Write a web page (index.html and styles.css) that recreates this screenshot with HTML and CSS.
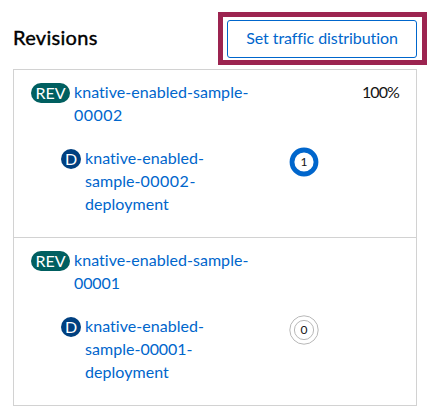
FILE: index.html
```html
<!DOCTYPE html>
<html lang="en">
<head>
<meta charset="utf-8">
<title>Revisions</title>
<link rel="stylesheet" href="styles.css">
</head>
<body>
<main class="panel">
  <header class="header">
    <h2 class="title">Revisions</h2>
    <div class="action">
      <button class="button" type="button">Set traffic distribution</button>
      <span class="highlight"></span>
    </div>
  </header>
  <ul class="list">
    <li class="item">
      <div class="revision">
        <span class="badge rev">REV</span>
        <a class="link name">knative-enabled-sample-<br><span class="digits">00002</span></a>
        <span class="percent">100%</span>
      </div>
      <div class="deployment">
        <span class="badge dep">D</span>
        <a class="link name">knative-enabled-<br>sample-<span class="digits">00002</span>-<br>deployment</a>
        <svg class="pods" viewBox="0 0 30 30"><circle cx="15" cy="15" r="12" fill="none" stroke="#06c" stroke-width="4.8"/><text x="15" y="19.2" text-anchor="middle">1</text></svg>
      </div>
    </li>
    <li class="item">
      <div class="revision">
        <span class="badge rev">REV</span>
        <a class="link name">knative-enabled-sample-<br><span class="digits last">00001</span></a>
      </div>
      <div class="deployment">
        <span class="badge dep">D</span>
        <a class="link name">knative-enabled-<br>sample-<span class="digits last">00001</span>-<br>deployment</a>
        <svg class="pods" viewBox="0 0 30 30"><g fill="none" stroke="#b8b8b8" stroke-width="1"><circle cx="15" cy="15" r="14.2"/><circle cx="15" cy="15" r="9.6"/></g><text x="15" y="19.2" text-anchor="middle">0</text></svg>
      </div>
    </li>
  </ul>
</main>
</body>
</html>
```
FILE: styles.css
```css
* { box-sizing: border-box; }
body {
  margin: 0;
  background: #fff;
  color: #151515;
  font: 16px/23px Lato, "Open Sans", sans-serif;
  font-variant-ligatures: none;
}
.panel { padding: 20px 14px 0 13px; }
.header {
  display: flex;
  align-items: center;
  justify-content: space-between;
  height: 38px;
  margin-bottom: 11px;
}
.title {
  margin: 0;
  padding-bottom: 4px;
  font-size: 20px;
  font-weight: 400;
  line-height: 26px;
  letter-spacing: 0.3px;
  color: #000;
  -webkit-text-stroke: 0.4px #000;
}
.action { position: relative; }
.button {
  display: block;
  width: 190px;
  height: 38px;
  padding: 0 0 3px;
  border: 1px solid #06c;
  border-radius: 3px;
  background: #fff;
  color: #06c;
  font: inherit;
  font-variant-ligatures: none;
  letter-spacing: -0.08px;
  white-space: nowrap;
}
.highlight {
  position: absolute;
  top: -8.5px;
  left: -9.5px;
  width: 209px;
  height: 53px;
  border: 5px solid #9c2450;
}
.list {
  margin: 0;
  padding: 0;
  list-style: none;
  border: 1px solid #d2d2d2;
}
.item {
  height: 167px;
  padding: 10px 17px 0;
}
.item + .item {
  height: 168px;
  border-top: 1px solid #d2d2d2;
}
.revision, .deployment {
  display: flex;
  align-items: flex-start;
}
.deployment { margin: 20px 0 0 30px; }
.badge {
  flex: none;
  height: 20px;
  margin: 3px 4px 0 0;
  border-radius: 10px;
  color: #fff;
  line-height: 19px;
  text-align: center;
}
.rev { width: 39px; background: #005f60; }
.dep { width: 20px; background: #004080; }
.link { color: #06c; white-space: nowrap; letter-spacing: 0.04px; }
.revision .name { width: 180px; }
.deployment .name { width: 204px; }
.digits { letter-spacing: 0.5px; }
.digits.last { letter-spacing: -0.1px; }
.percent {
  margin-left: auto;
  letter-spacing: -0.9px;
  color: #151515;
}
.pods {
  flex: none;
  width: 30px;
  height: 30px;
  margin-top: 1px;
  font-size: 12px;
}
.pods text { fill: #151515; }
```
